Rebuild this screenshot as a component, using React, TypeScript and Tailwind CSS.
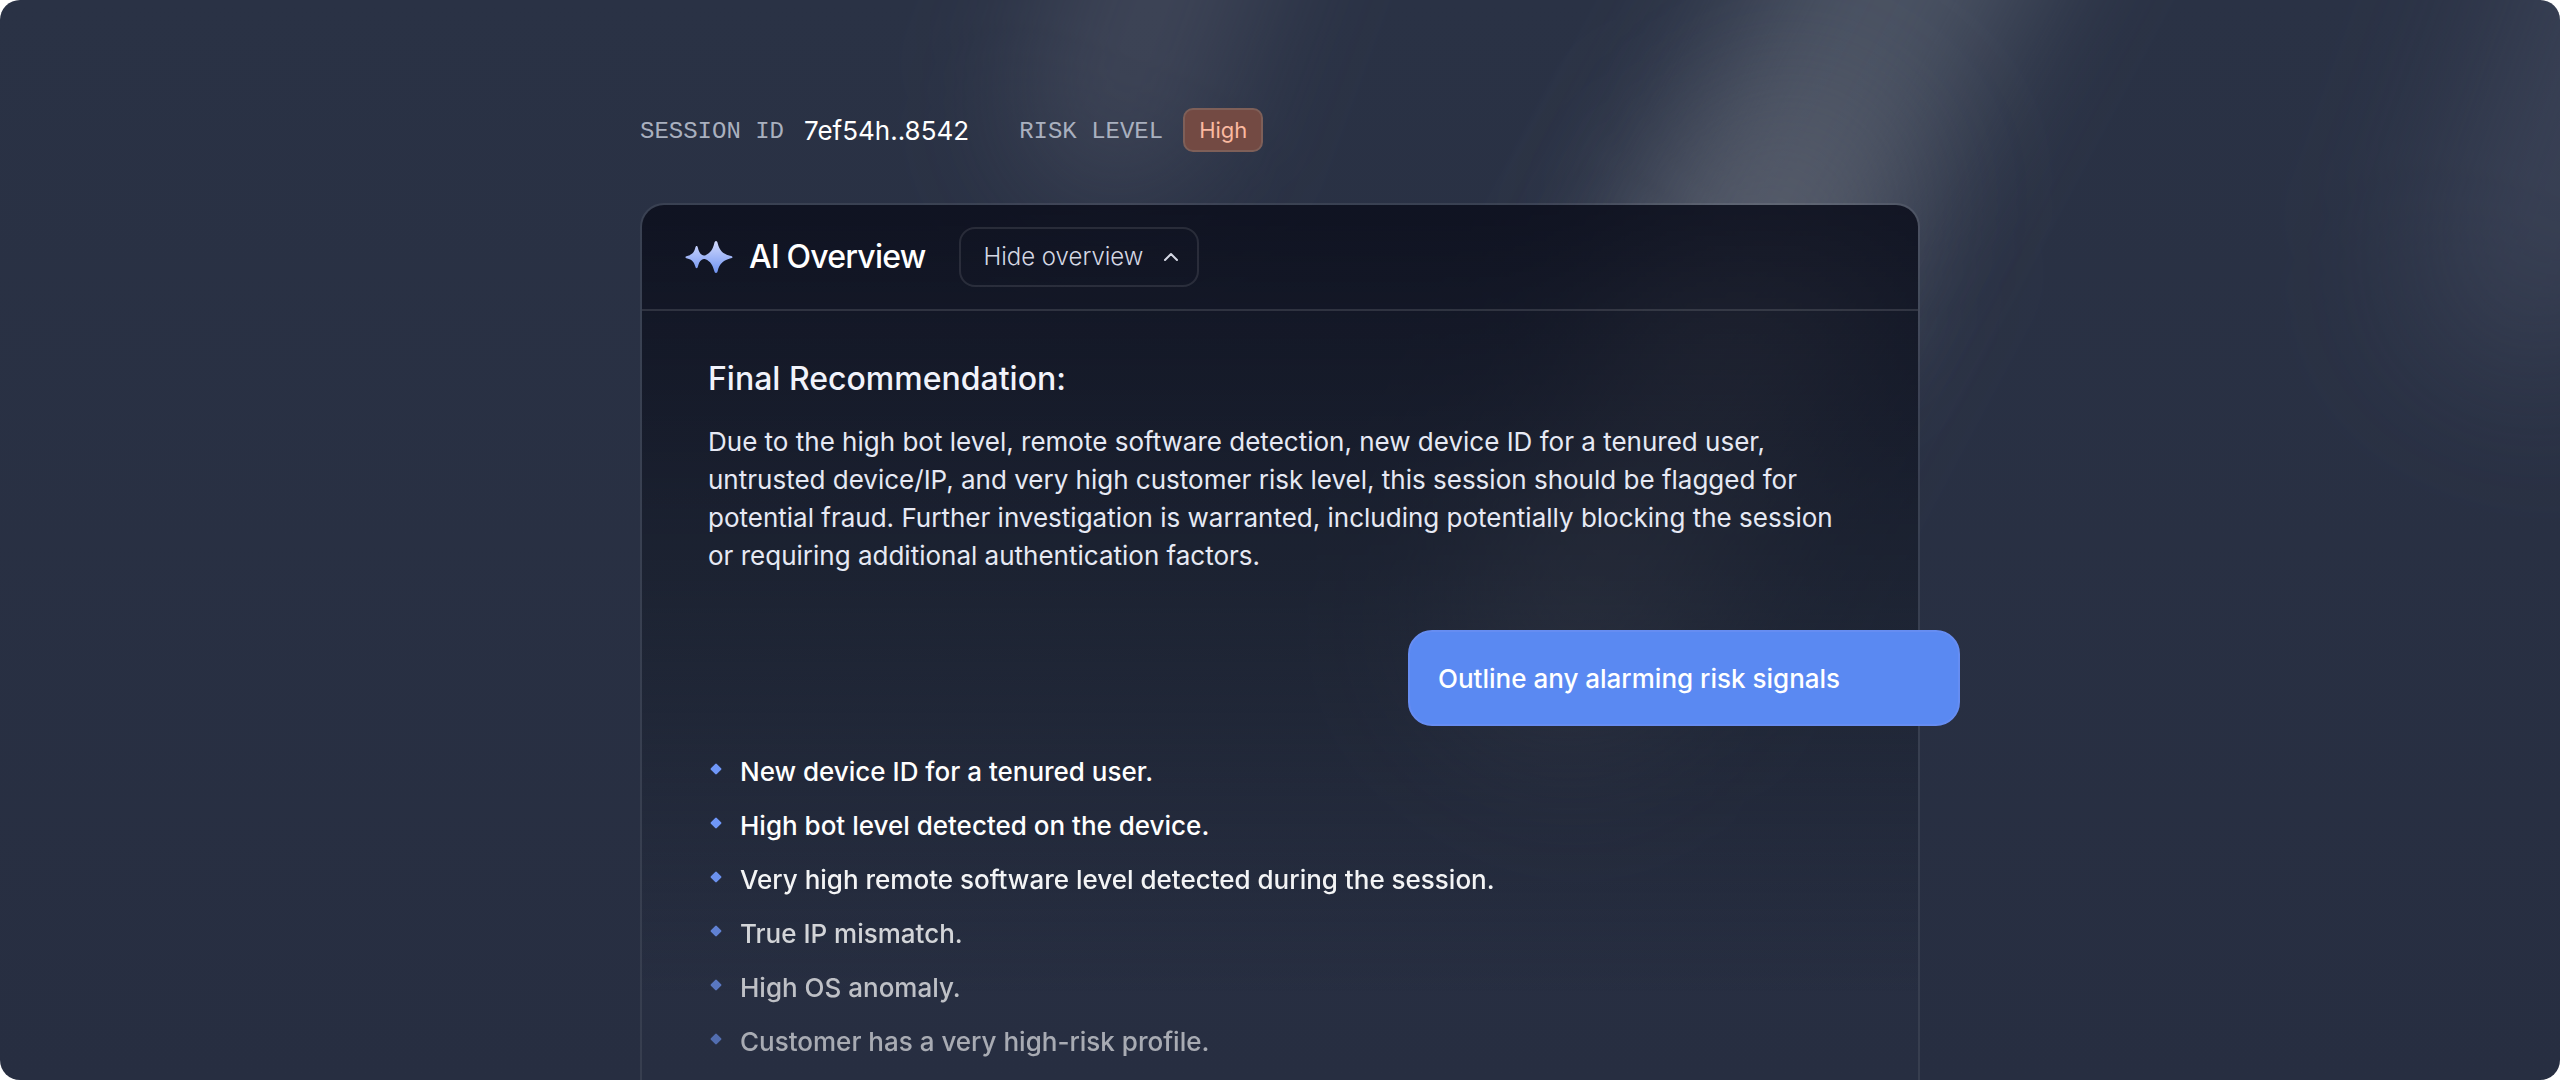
import { ChevronUp } from "lucide-react";

const signals = [
  { text: "New device ID for a tenured user.", tone: "opacity-100" },
  { text: "High bot level detected on the device.", tone: "opacity-100" },
  { text: "Very high remote software level detected during the session.", tone: "opacity-95" },
  { text: "True IP mismatch.", tone: "opacity-80" },
  { text: "High OS anomaly.", tone: "opacity-70" },
  { text: "Customer has a very high-risk profile.", tone: "opacity-60" },
];

function Sparkles() {
  return (
    <svg viewBox="0 0 48 34" className="w-12 h-[34px]" aria-hidden="true">
      <defs>
        <linearGradient id="spark" x1="0" y1="0" x2="0" y2="1">
          <stop offset="0" stopColor="#d3dafc" />
          <stop offset="1" stopColor="#7094f2" />
        </linearGradient>
      </defs>
      <path
        fill="url(#spark)"
        d="M31 1C32 1 32.400 2 32.700 3.200C34.500 10 37 13.500 45 15.800C46.500 16.200 47.500 16.500 47.500 17.200C47.500 17.900 46.500 18.200 45 18.600C37 21 34.500 24.500 32.700 31C32.400 32.300 32 33 31 33C30 33 29.600 32.300 29.300 31C27.700 25 25.500 21.300 20.500 19.200C19 18.800 18 18.900 16.800 19.700C14.500 21.200 13.700 23.500 12.900 26.600C12.600 27.800 12.300 28.300 11.600 28.300C10.900 28.300 10.600 27.800 10.300 26.600C9 21.500 7 19.600 2.200 18.400C1 18.100 0.500 17.800 0.500 17.200C0.500 16.600 1 16.300 2.200 16C7 14.700 9 12.800 10.300 7.800C10.600 6.600 10.900 6.100 11.600 6.100C12.300 6.100 12.600 6.600 12.900 7.800C13.700 10.900 14.500 13.200 16.800 14.700C18 15.500 19 15.600 20.500 15.200C25.500 13 27.700 9.300 29.300 3.200C29.600 2 30 1 31 1Z"
      />
    </svg>
  );
}

function Diamond() {
  return (
    <svg viewBox="0 0 12 12" className="size-3 mb-1 shrink-0" aria-hidden="true">
      <path
        fill="#6f97f8"
        d="M5.200 0.900Q6 0.100 6.800 0.900L11.100 5.200Q11.900 6 11.100 6.800L6.800 11.100Q6 11.900 5.200 11.100L0.900 6.800Q0.100 6 0.900 5.200Z"
      />
    </svg>
  );
}

export default function App() {
  return (
    <div className="bg-white font-['Inter',sans-serif]">
      <main className="relative isolate min-h-screen overflow-hidden rounded-[20px] bg-linear-to-b from-[#2a3245] to-[#272e41] flex flex-col px-8 pt-[108px]">
        {/* Light beams */}
        <div className="absolute -z-10 left-[1760px] -top-[420px] w-[240px] h-[860px] rotate-[28deg] rounded-full bg-[#727988]/45 blur-[64px]" />
        <div className="absolute -z-10 left-[1570px] top-[60px] w-[220px] h-[700px] rotate-[28deg] rounded-full bg-[#73757f]/30 blur-[80px]" />
        <div className="absolute -z-10 left-[1070px] -top-[270px] w-[190px] h-[480px] rotate-[20deg] rounded-full bg-[#6d6f80]/30 blur-[64px]" />
        <div className="absolute -z-10 -right-[130px] -top-[160px] w-[200px] h-[540px] rotate-[20deg] rounded-full bg-[#626b80]/30 blur-[80px]" />

        <div className="w-full max-w-7xl mx-auto flex-1 flex flex-col">
          <dl className="flex items-center gap-[50px] h-11">
            <div className="flex items-center gap-5">
              <dt className="pt-1 font-['Liberation_Mono',monospace] text-2xl text-[#a9b0bf]">SESSION ID</dt>
              <dd className="text-[26px] text-white">7ef54h..8542</dd>
            </div>
            <div className="flex items-center gap-5">
              <dt className="pt-1 font-['Liberation_Mono',monospace] text-2xl text-[#a9b0bf]">RISK LEVEL</dt>
              <dd className="flex items-center h-11 px-[14px] rounded-[10px] border-2 border-[#7e5f58] bg-[#734a43] text-[22px] text-[#fbb9a0]">
                High
              </dd>
            </div>
          </dl>

          {/* Overview card */}
          <section className="mt-[51px] flex-1 rounded-t-3xl border-2 border-b-0 border-white/8 bg-linear-to-b from-[#0d101e]/90 via-[#161c29]/60 via-45% to-[#272e41]/0 to-90% bg-clip-padding">
            <header className="flex items-center px-[43px] py-[22px] border-b-2 border-white/12">
              <Sparkles />
              <h1 className="ml-4 text-[32px] font-medium tracking-tight text-white">AI Overview</h1>
              <button
                type="button"
                className="ml-[34px] flex items-center gap-4 h-[60px] pl-[22px] pr-[14px] rounded-2xl border-2 border-white/10 text-2xl font-light text-[#d5d8e4]"
              >
                Hide overview
                <ChevronUp className="size-6" strokeWidth={2} />
              </button>
            </header>

            <div className="px-[66px] pt-12">
              <h2 className="text-[32px] leading-10 font-medium text-[#f1f3fb]">Final Recommendation:</h2>
              <p className="mt-6 text-[26px] leading-[38px] text-[#e6e9f4]">
                Due to the high bot level, remote software detection, new device ID for a tenured user,
                untrusted device/IP, and very high customer risk level, this session should be flagged for
                potential fraud. Further investigation is warranted, including potentially blocking the session
                or requiring additional authentication factors.
              </p>

              <div className="mt-[55px] -mr-[108px] flex justify-end">
                <p className="w-[552px] h-24 flex items-center px-7 rounded-3xl border-2 border-[#668df2] bg-[#5a89f2] text-[26px] font-medium text-white">
                  Outline any alarming risk signals
                </p>
              </div>

              <ul className="mt-[18px] pl-0.5">
                {signals.map((s) => (
                  <li key={s.text} className={`flex items-center gap-[18px] h-[54px] ${s.tone}`}>
                    <Diamond />
                    <span className="text-[26px] font-medium text-white">{s.text}</span>
                  </li>
                ))}
              </ul>
            </div>
          </section>
        </div>
      </main>
    </div>
  );
}
